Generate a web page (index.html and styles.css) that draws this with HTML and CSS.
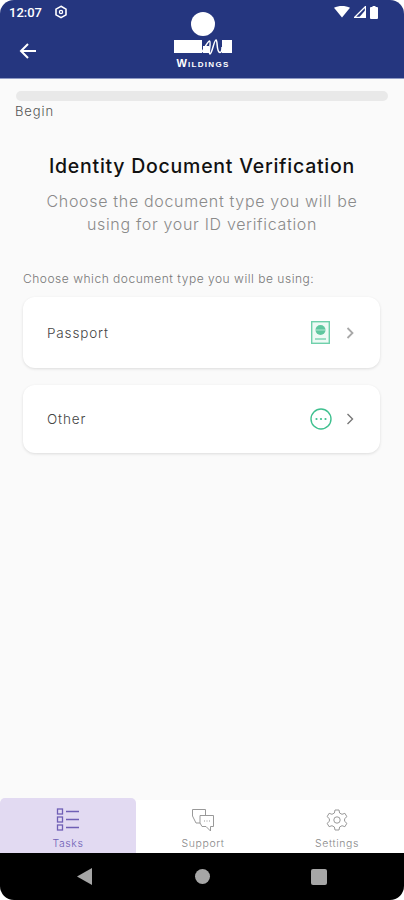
FILE: index.html
```html
<!DOCTYPE html>
<html lang="en">
<head>
    <meta charset="UTF-8">
    <meta name="viewport" content="width=device-width, initial-scale=1.0">
    <title>Identity Document Verification</title>
    <link rel="stylesheet" href="styles.css">
</head>
<body>
    <div class="screen">
        <header class="header">
            <!-- Status bar -->
            <div class="status-bar">
                <span class="time">12:07</span>
                <svg class="status-gear" width="14" height="14" viewBox="0 0 14 14" fill="none" stroke="#fff">
                    <path d="M7 1.300 12 4.100V9.900L7 12.700 2 9.900V4.100Z" stroke-width="1.600"/>
                    <circle cx="7" cy="7" r="1.600" stroke-width="1.300"/>
                </svg>
                <div class="status-right">
                    <svg width="16" height="12" viewBox="0 0 16 12"><path d="M0 1.800C4.500-.6 11.500-.6 16 1.800L8 11.500Z" fill="#fff"/></svg>
                    <svg width="12" height="12" viewBox="0 0 12 12"><path d="M11.500.5V11.500H.5Z" fill="none" stroke="#fff" stroke-width="1.300"/><path d="M11.500 4V11.500H5Z" fill="#fff"/></svg>
                    <svg width="8" height="13" viewBox="0 0 8 13"><path d="M2.500 0H5.500V1H7Q8 1 8 2V12Q8 13 7 13H1Q0 13 0 12V2Q0 1 1 1H2.500Z" fill="#fff"/></svg>
                </div>
            </div>
            <!-- App bar -->
            <div class="app-bar">
                <svg class="back" width="18" height="18" viewBox="0 0 18 18" fill="none" stroke="#fff" stroke-width="2">
                    <path d="M17 9H2M9 2 2 9l7 7"/>
                </svg>
                <div class="logo">
                    <div class="logo-sun"></div>
                    <div class="logo-bar">
                        <svg width="60" height="20" viewBox="0 0 60 20">
                            <rect x="1" y="4" width="28" height="13" fill="#fff"/>
                            <rect x="30" y="10" width="6" height="7" fill="#fff"/>
                            <rect x="49" y="4" width="10" height="13" fill="#fff"/>
                            <path d="M29 16C32 11 35 5 36.500 5 38.500 6 35 17 37 18 39 18 41 4 43 4 45 5 43 16 47 16.500 48.500 16.500 49 14 49 11" fill="none" stroke="#fff" stroke-width="1.500"/>
                        </svg>
                    </div>
                    <div class="logo-name">Wildings</div>
                </div>
            </div>
        </header>

        <main class="content">
            <div class="progress"></div>
            <div class="progress-label">Begin</div>

            <h1 class="title">Identity Document Verification</h1>
            <p class="subtitle">Choose the document type you will be using for your ID verification</p>

            <p class="choose">Choose which document type you will be using:</p>

            <div class="card card-passport">
                <span class="card-name">Passport</span>
                <svg class="card-icon" width="19" height="23" viewBox="0 0 19 23" fill="#eefaf5" stroke="#6fd0ab">
                    <rect x=".7" y=".7" width="17.600" height="21.600" stroke-width="1.400"/>
                    <circle cx="9.500" cy="9" r="5" fill="#5fc79f" stroke="none"/>
                    <path d="M4.500 9h10" stroke="#c9efe0" stroke-width=".8"/>
                    <path d="M4 18h11" stroke-width="1.300"/>
                </svg>
                <svg class="chevron" width="9" height="12" viewBox="0 0 9 12" fill="none" stroke="#a8a8a8" stroke-width="1.800">
                    <path d="M1.500 1 6.500 6l-5 5"/>
                </svg>
            </div>

            <div class="card card-other">
                <span class="card-name">Other</span>
                <svg class="card-icon" width="22" height="22" viewBox="0 0 22 22" fill="none" stroke="#3fc08f">
                    <circle cx="11" cy="11" r="10" stroke-width="1.400"/>
                    <circle cx="6.500" cy="11" r="1.100" fill="#3fc08f" stroke="none"/>
                    <circle cx="11" cy="11" r="1.100" fill="#3fc08f" stroke="none"/>
                    <circle cx="15.500" cy="11" r="1.100" fill="#3fc08f" stroke="none"/>
                </svg>
                <svg class="chevron" width="9" height="12" viewBox="0 0 9 12" fill="none" stroke="#777" stroke-width="1.400">
                    <path d="M1.500 1 6.500 6l-5 5"/>
                </svg>
            </div>
        </main>

        <!-- Bottom tabs -->
        <nav class="tabs">
            <div class="tab tab-active">
                <svg width="24" height="24" viewBox="0 0 24 24" fill="none" stroke="#6f5fb5" stroke-width="1.300">
                    <rect x="1.500" y="1" width="5" height="5"/>
                    <rect x="1.500" y="9" width="5" height="5"/>
                    <rect x="1.500" y="17" width="5" height="5"/>
                    <path d="M10 3.500h13M10 11.500h13M10 19.500h13"/>
                </svg>
                <span>Tasks</span>
            </div>
            <div class="tab">
                <svg width="24" height="24" viewBox="0 0 24 24" fill="none" stroke="#999">
                    <path d="M9 15H5L1.500 8V1.500H14.500V7"/>
                    <path d="M9 7.500H22.500V18.500H19.500V23L15 18.500H11L9 15Z" fill="#fff"/>
                    <path d="M13 13h1M15.500 13h1M18 13h1"/>
                </svg>
                <span>Support</span>
            </div>
            <div class="tab">
                <svg width="22" height="22" viewBox="0 0 22 22" fill="none" stroke="#999">
                    <path d="M9 1h4l.6 3 2.400 1.300 2.900-1 2 3.400-2.300 2 0 2.600 2.300 2-2 3.400-2.900-1L13.600 18 13 21H9l-.6-3L6 16.700l-2.900 1-2-3.400 2.300-2 0-2.600-2.300-2 2-3.400 2.900 1L8.400 4Z"/>
                    <circle cx="11" cy="11" r="3.200"/>
                </svg>
                <span>Settings</span>
            </div>
        </nav>

        <!-- Android nav bar -->
        <div class="nav-bar">
            <svg width="15" height="17" viewBox="0 0 15 17"><path d="M15 0V17L0 8.500Z" fill="#a6a6a6"/></svg>
            <div class="nav-home"></div>
            <div class="nav-square"></div>
        </div>
    </div>
</body>
</html>
```

FILE: styles.css
```css
* {
    margin: 0;
    padding: 0;
    box-sizing: border-box;
    font-family: Inter, "Liberation Sans", sans-serif;
}
body {
    width: 404px;
    height: 900px;
    background: #fff;
    overflow: hidden;
}
.screen {
    display: flex;
    flex-direction: column;
    height: 900px;
    background: #fafafa;
    border-radius: 14px;
    overflow: hidden;
}
.header {
    height: 79px;
    background: #25367f;
    border-bottom: 1px solid #8f9ac4;
    color: #fff;
}
.status-bar {
    display: flex;
    align-items: center;
    height: 24px;
    padding: 0 0 0 9px;
}
.time {
    font-size: 13px;
    font-weight: 500;
    font-family: Roboto, sans-serif;
}
.status-gear {
    margin-left: 12px;
}
.status-right {
    display: flex;
    align-items: center;
    gap: 4px;
    margin-left: auto;
    padding-right: 26px;
}
.app-bar {
    display: flex;
    align-items: center;
    height: 54px;
    padding-left: 19px;
    position: relative;
}
.logo {
    position: absolute;
    left: 173px;
    top: -12px;
    width: 60px;
    display: flex;
    flex-direction: column;
    align-items: center;
}
.logo-sun {
    width: 24px;
    height: 24px;
    border-radius: 50%;
    background: #fff;
}
.logo-bar {
    height: 20px;
}
.logo-bar svg {
    display: block;
}
.logo-name {
    font-family: "Liberation Sans", sans-serif;
    font-size: 11px;
    font-weight: 700;
    font-variant: small-caps;
    letter-spacing: 1.300px;
    line-height: 10px;
    margin-top: 2px;
    white-space: nowrap;
}
.content {
    flex: 1;
    padding: 12px 0 0;
    display: flex;
    flex-direction: column;
}
.progress {
    height: 10px;
    margin: 0 16px;
    background: #e9e9e9;
    border-radius: 5px;
}
.progress-label {
    margin: 1px 0 0 15px;
    font-size: 13px;
    font-weight: 300;
    letter-spacing: .9px;
    line-height: 18px;
    color: #555;
}
.title {
    margin-top: 33px;
    font-size: 19.500px;
    font-weight: 500;
    letter-spacing: .75px;
    line-height: 26px;
    text-align: center;
    color: #111;
}
.subtitle {
    margin: 11px auto 0;
    width: 330px;
    font-size: 16px;
    font-weight: 300;
    letter-spacing: .68px;
    line-height: 23px;
    text-align: center;
    color: #8a8a8a;
}
.choose {
    margin: 35px 0 0 23px;
    font-size: 12px;
    font-weight: 300;
    letter-spacing: .52px;
    line-height: 16px;
    color: #777;
}
.card {
    display: flex;
    align-items: center;
    margin: 0 24px 0 23px;
    padding: 0 25px 0 24px;
    background: #fff;
    border-radius: 12px;
    box-shadow: 0 1px 3px rgba(0, 0, 0, .12);
}
.card-passport {
    height: 71px;
    margin-top: 10px;
}
.card-other {
    height: 68px;
    margin-top: 17px;
}
.card-name {
    flex: 1;
    font-size: 13.500px;
    font-weight: 300;
    letter-spacing: .85px;
    color: #444;
}
.card-icon {
    margin-right: 16px;
}
.card-other .card-icon {
    margin-right: 14px;
}
.tabs {
    display: flex;
    height: 53px;
    background: #fff;
}
.tab {
    flex: 1;
    display: flex;
    flex-direction: column;
    align-items: center;
    padding-top: 8px;
    gap: 6px;
    font-size: 10.500px;
    font-weight: 300;
    letter-spacing: .6px;
    color: #888;
}
.tab svg {
    height: 24px;
}
.tab-active {
    flex: none;
    width: 136px;
    margin-top: -2px;
    padding-top: 10px;
    background: #e2daf2;
    border-radius: 5px 5px 0 0;
    color: #6f5fb5;
}
.tab span {
    line-height: 12px;
}
.nav-bar {
    display: flex;
    align-items: center;
    height: 47px;
    background: #000;
    padding-left: 77px;
}
.nav-home {
    width: 15px;
    height: 15px;
    margin-left: 103px;
    border-radius: 50%;
    background: #a6a6a6;
}
.nav-square {
    width: 16px;
    height: 16px;
    margin-left: 101px;
    border-radius: 2px;
    background: #a6a6a6;
}
```
